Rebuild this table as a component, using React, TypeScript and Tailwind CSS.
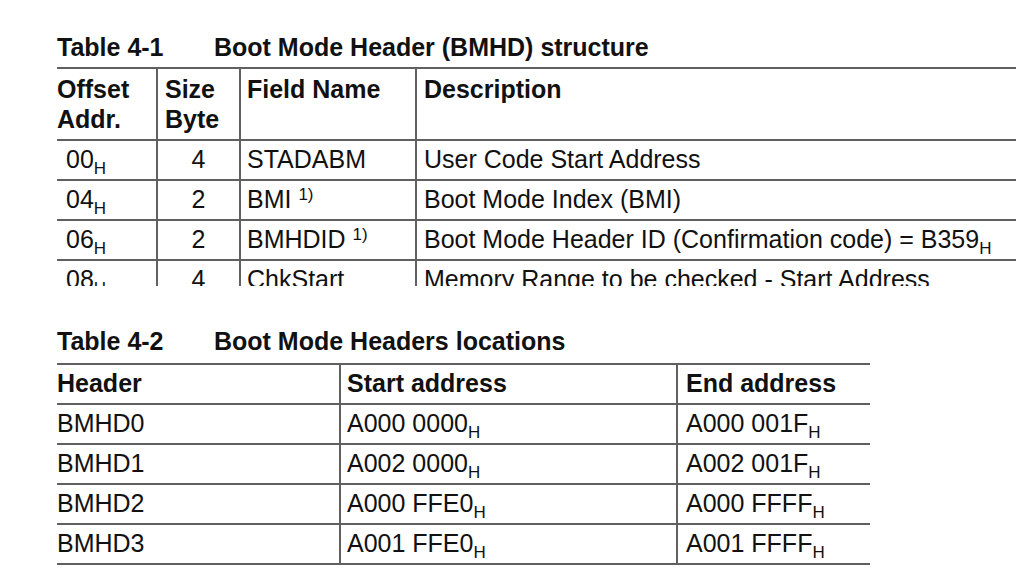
import React from "react";

const font = { fontFamily: '"Liberation Sans", Arial, sans-serif' };

function H() {
  return <span className="relative top-[6px] text-[17px] leading-none">H</span>;
}

function Sup() {
  return <span className="relative top-[-8px] text-[17px] leading-none">1)</span>;
}

const t1Cols = "grid grid-cols-[99px_83px_176px_601px]";
const t2Cols = "grid grid-cols-[282px_337px_194px]";
const line = "border-[#606060]";

type Row1 = { off: string; size: string; field: React.ReactNode; desc: React.ReactNode };

const rows1: Row1[] = [
  { off: "00", size: "4", field: "STADABM", desc: "User Code Start Address" },
  { off: "04", size: "2", field: <>BMI <Sup /></>, desc: "Boot Mode Index (BMI)" },
  {
    off: "06",
    size: "2",
    field: <>BMHDID <Sup /></>,
    desc: <>Boot Mode Header ID (Confirmation code) = B359<H /></>,
  },
  { off: "08", size: "4", field: "ChkStart", desc: "Memory Range to be checked - Start Address" },
];

const rows2 = [
  ["BMHD0", "A000 0000", "A000 001F"],
  ["BMHD1", "A002 0000", "A002 001F"],
  ["BMHD2", "A000 FFE0", "A000 FFFF"],
  ["BMHD3", "A001 FFE0", "A001 FFFF"],
];

export default function App() {
  return (
    <div className="w-[1024px] h-[572px] bg-white text-[#111] overflow-hidden" style={font}>
      <div className="pl-[57px] pt-[33px]">
        {/* Table 4-1 title */}
        <div className="flex text-[25px] leading-[28px] font-bold">
          <span className="w-[157px]">Table 4-1</span>
          <span>Boot Mode Header (BMHD) structure</span>
        </div>
        {/* Table 4-1 */}
        <div className="mt-[6px] h-[219px] w-[959px] overflow-hidden">
          <div className={`${t1Cols} h-[72px] border-t-2 ${line} text-[25px] leading-[30px] font-bold`}>
            <div className="pt-[5px]">
              Offset
              <br />
              Addr.
            </div>
            <div className={`border-l-2 ${line} pt-[5px] pl-[7px]`}>
              Size
              <br />
              Byte
            </div>
            <div className={`border-l-2 ${line} pt-[5px] pl-[6px]`}>Field Name</div>
            <div className={`border-l-2 ${line} pt-[5px] pl-[7px]`}>Description</div>
          </div>
          {rows1.map((r, i) => (
            <div key={i} className={`${t1Cols} h-[40px] border-t-2 ${line} text-[25px] leading-[28px]`}>
              <div className="pt-[4px] pl-[9px] whitespace-nowrap">
                {r.off}
                <H />
              </div>
              <div className={`border-l-2 ${line} pt-[4px] text-center`}>{r.size}</div>
              <div className={`border-l-2 ${line} pt-[4px] pl-[6px] whitespace-nowrap`}>{r.field}</div>
              <div className={`border-l-2 ${line} pt-[4px] pl-[7px] whitespace-nowrap`}>{r.desc}</div>
            </div>
          ))}
        </div>

        {/* Table 4-2 title */}
        <div className="mt-[41px] flex text-[25px] leading-[28px] font-bold">
          <span className="w-[157px]">Table 4-2</span>
          <span>Boot Mode Headers locations</span>
        </div>
        {/* Table 4-2 */}
        <div className="mt-[8px] w-[813px]">
          <div className={`${t2Cols} h-[40px] border-t-2 ${line} text-[25px] leading-[28px] font-bold`}>
            <div className="pt-[4px]">Header</div>
            <div className={`border-l-2 ${line} pt-[4px] pl-[6px]`}>Start address</div>
            <div className={`border-l-2 ${line} pt-[4px] pl-[8px]`}>End address</div>
          </div>
          {rows2.map((r, i) => (
            <div
              key={i}
              className={`${t2Cols} h-[40px] border-t-2 ${line} ${i === rows2.length - 1 ? "border-b-2 h-[42px]" : ""} text-[25px] leading-[28px]`}
            >
              <div className="pt-[4px]">{r[0]}</div>
              <div className={`border-l-2 ${line} pt-[4px] pl-[6px] whitespace-nowrap`}>
                {r[1]}
                <H />
              </div>
              <div className={`border-l-2 ${line} pt-[4px] pl-[8px] whitespace-nowrap`}>
                {r[2]}
                <H />
              </div>
            </div>
          ))}
        </div>
      </div>
    </div>
  );
}
